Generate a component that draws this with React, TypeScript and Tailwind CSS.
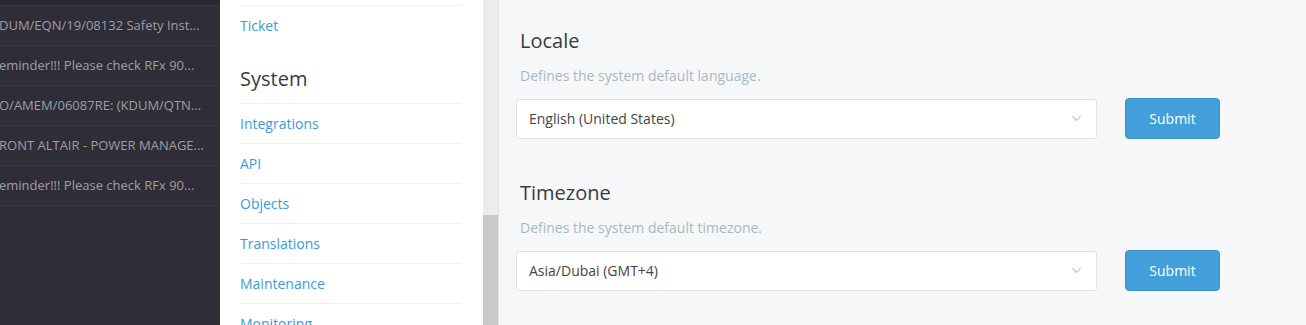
import { ChevronDown } from 'lucide-react';

const tickets = [
  'DUM/EQN/19/08132 Safety Inst...',
  'eminder!!! Please check RFx 90...',
  'O/AMEM/06087RE: (KDUM/QTN...',
  'RONT ALTAIR - POWER MANAGE...',
  'eminder!!! Please check RFx 90...',
];

const systemLinks = ['Integrations', 'API', 'Objects', 'Translations', 'Maintenance', 'Monitoring'];

function Setting({ title, description, value }: { title: string; description: string; value: string }) {
  return (
    <div className="flex flex-col">
      <h2 className="ml-[4px] text-[20px] leading-[28px] text-[#3a3a3f]">{title}</h2>
      <p className="ml-[4px] mt-[11px] text-[14px] leading-[20px] text-[#a9b9c4]">{description}</p>
      <div className="mt-[12px] flex items-center gap-[28px]">
        <div className="flex h-[40px] w-[581px] items-center justify-between rounded-[3px] border border-[#e2e2e2] bg-white pl-[12px] pr-[12px]">
          <span className="text-[14px] text-[#444446]">{value}</span>
          <ChevronDown size={15} strokeWidth={2} className="text-[#c2c2c2]" />
        </div>
        <button className="h-[41px] w-[95px] rounded-[4px] border border-[#3a93cc] bg-[#429fd9] text-[14px] font-medium text-white">
          Submit
        </button>
      </div>
    </div>
  );
}

export default function App() {
  return (
    <div className="flex h-[325px] w-[1306px] overflow-hidden font-['Open_Sans',sans-serif]">
      <div className="flex w-[220px] shrink-0 flex-col bg-[#2f2e38]">
        <div className="h-[5px] bg-[#2a2932]" />
        {tickets.map((t, i) => (
          <div
            key={i}
            className="flex h-[40px] items-center whitespace-nowrap border-t border-[#3a3944] text-[13px] text-[#9e9da5]"
          >
            <span className="-ml-[1px]">{t}</span>
          </div>
        ))}
        <div className="border-t border-[#3a3944]" />
      </div>

      <div className="w-[263px] shrink-0 bg-white pl-[20px]">
        <div className="w-[222px]">
          <div className="h-[5px]" />
          <div className="flex h-[40px] items-center border-t border-[#efefef]">
            <a className="text-[14px] text-[#3b9ad8]">Ticket</a>
          </div>
          <div className="flex h-[58px] items-end pb-[10px]">
            <h3 className="text-[20px] leading-[28px] text-[#3a3a3f]">System</h3>
          </div>
          {systemLinks.map((l) => (
            <div key={l} className="flex h-[40px] items-center border-t border-[#efefef]">
              <a className="text-[14px] text-[#3b9ad8]">{l}</a>
            </div>
          ))}
        </div>
      </div>

      <div className="flex w-[15px] shrink-0 flex-col bg-[#ececec]">
        <div className="h-[215px]" />
        <div className="flex-1 bg-[#c9c9c9]" />
      </div>
      <div className="w-[1px] shrink-0 bg-[#e4e4e6]" />

      <div className="flex flex-1 flex-col gap-[40px] bg-[#f6f7f9] pl-[17px] pt-[27px]">
        <Setting title="Locale" description="Defines the system default language." value="English (United States)" />
        <Setting title="Timezone" description="Defines the system default timezone." value="Asia/Dubai (GMT+4)" />
      </div>
    </div>
  );
}
